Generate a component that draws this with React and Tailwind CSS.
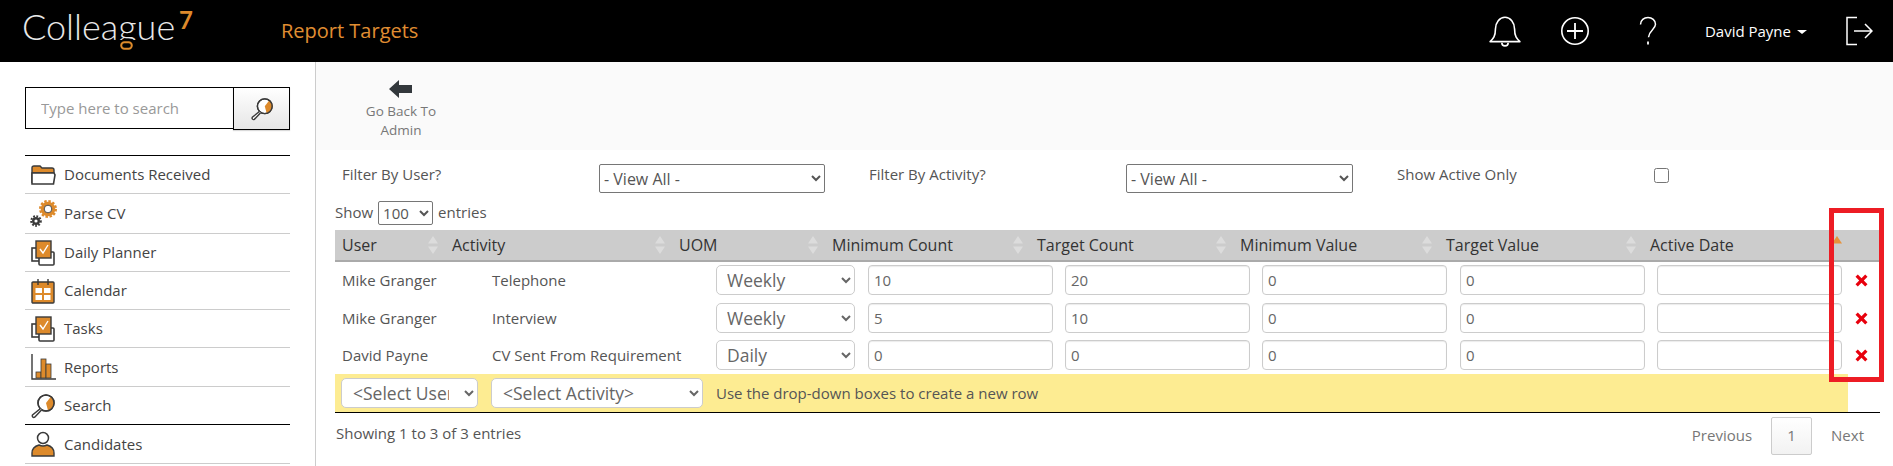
import React from "react";

const OR = "#dd8a2b";
const DK = "#3a3a3a";

const FolderIcon = () => (
  <svg width="26" height="22" viewBox="0 0 26 22" fill="none">
    <path d="M2 19V4q0-2 2-2h6l2 2h10q2 0 2 2v3H2z" fill={OR} stroke={DK} strokeWidth="1.4" />
    <path d="M2 9h22l1 2-1.5 9H2z" fill="#fff" stroke={DK} strokeWidth="1.6" />
  </svg>
);
const GearIcon = () => (
  <svg width="28" height="28" viewBox="0 0 28 28" fill="none">
    <circle cx="18" cy="9" r="5.5" fill="#fff" stroke={OR} strokeWidth="3.6" />
    <circle cx="18" cy="9" r="7.8" fill="none" stroke={OR} strokeWidth="2.4" strokeDasharray="2.4 1.7" />
    <circle cx="18" cy="9" r="3.8" fill="#fff" stroke={DK} strokeWidth="0.9" />
    <circle cx="6" cy="21" r="2.8" fill="#fff" stroke={DK} strokeWidth="2.4" />
    <circle cx="6" cy="21" r="4.8" fill="none" stroke={DK} strokeWidth="2" strokeDasharray="1.8 1.4" />
  </svg>
);
const TaskIcon = () => (
  <svg width="26" height="26" viewBox="0 0 26 26" fill="none">
    <rect x="2" y="8" width="12" height="13" fill="#fff" stroke={DK} strokeWidth="1.6" />
    <rect x="9" y="12" width="15" height="13" rx="1" fill="#fff" stroke={DK} strokeWidth="1.6" />
    <rect x="6" y="1" width="15" height="17" fill={OR} stroke={DK} strokeWidth="1.4" />
    <path d="M10 9l3 4 5-8" stroke="#fff" strokeWidth="1.4" />
  </svg>
);
const CalendarIcon = () => (
  <svg width="26" height="26" viewBox="0 0 26 26" fill="none">
    <rect x="2" y="4" width="22" height="21" rx="1" fill={OR} stroke={DK} strokeWidth="1.4" />
    <path d="M8 1v6M18 1v6" stroke={DK} strokeWidth="1.4" />
    <rect x="5.5" y="10" width="6.5" height="5" fill="#fff" />
    <rect x="14" y="10" width="6.5" height="5" fill="#fff" />
    <rect x="5.5" y="17" width="6.5" height="5" fill="#fff" />
    <rect x="14" y="17" width="6.5" height="5" fill="#fff" />
  </svg>
);
const ReportIcon = () => (
  <svg width="26" height="26" viewBox="0 0 26 26" fill="none">
    <path d="M2 0v25h24" stroke={DK} strokeWidth="1.4" />
    <rect x="6" y="18" width="5" height="6" fill={OR} stroke={DK} strokeWidth="0.8" />
    <rect x="11" y="5" width="5" height="19" fill={OR} stroke={DK} strokeWidth="0.8" />
    <rect x="16" y="10" width="5" height="14" fill={OR} stroke={DK} strokeWidth="0.8" />
  </svg>
);
const SearchGlass = ({ s = 26 }) => (
  <svg width={s} height={s} viewBox="0 0 26 26" fill="none">
    <circle cx="16" cy="10" r="8" fill="#fff" stroke={DK} strokeWidth="1.5" />
    <path d="M16 10l6.5-5A8 8 0 0 1 16 18z" fill={OR} transform="rotate(-15 16 10)" />
    <circle cx="16" cy="10" r="8" stroke={DK} strokeWidth="1.5" />
    <path d="M10.5 15.5L2.5 22a1.6 1.6 0 0 0 2.2 2.2L11.5 17" fill="#fff" stroke={DK} strokeWidth="1.5" />
  </svg>
);
const PersonIcon = () => (
  <svg width="26" height="26" viewBox="0 0 26 26" fill="none">
    <circle cx="13" cy="7" r="5.5" fill="#fff" stroke={DK} strokeWidth="1.5" />
    <path d="M2 25v-3q0-6 7-8 4 2 8 0 7 2 7 8v3z" fill={OR} stroke={DK} strokeWidth="1.4" />
  </svg>
);

const menu = [
  ["Documents Received", <FolderIcon />, "h-[38px]", "border-[#ccc]"],
  ["Parse CV", <GearIcon />, "h-[40px]", "border-[#ccc]"],
  ["Daily Planner", <TaskIcon />, "h-[38px]", "border-[#ccc]"],
  ["Calendar", <CalendarIcon />, "h-[38px]", "border-[#ccc]"],
  ["Tasks", <TaskIcon />, "h-[38px]", "border-[#ccc]"],
  ["Reports", <ReportIcon />, "h-[39px]", "border-[#ccc]"],
  ["Search", <SearchGlass />, "h-[38px]", "border-black"],
  ["Candidates", <PersonIcon />, "h-[39px]", "border-[#ccc]"],
];

const Sort = ({ active }) => (
  <svg width="10" height="18" viewBox="0 0 10 18" className="shrink-0">
    <path d="M5 0l5 7.5H0z" fill={active ? "#e8923a" : "#dcdcdc"} />
    {!active && <path d="M5 18l5-7.5H0z" fill="#dcdcdc" />}
  </svg>
);

const headers = [
  ["User", 110],
  ["Activity", 227],
  ["UOM", 153],
  ["Minimum Count", 205],
  ["Target Count", 203],
  ["Minimum Value", 206],
  ["Target Value", 204],
  ["Active Date", 206],
];

const rows = [
  ["Mike Granger", "Telephone", "Weekly", "10", "20", "h-[37px] [&>td]:pb-[1px]"],
  ["Mike Granger", "Interview", "Weekly", "5", "10", "h-[38px]"],
  ["David Payne", "CV Sent From Requirement", "Daily", "0", "0", "h-[37px] [&>td]:pb-[1px]"],
];

const Num = ({ v }) => (
  <input
    readOnly
    value={v}
    className="block w-full h-[30px] border border-[#ccc] rounded-[4px] bg-white px-[5px] text-[15px] text-[#666] shadow-[inset_0_1px_1px_rgba(0,0,0,0.08)] outline-none"
  />
);

const BigSelect = ({ v, cls }) => (
  <select
    defaultValue={v}
    className={`block h-[30px] border border-[#ccc] rounded-[5px] bg-white text-[17.5px] text-[#666] outline-none ${cls}`}
  >
    <option>{v}</option>
  </select>
);

const ViewAll = ({ cls }) => (
  <select className={`h-[29px] border border-[#767676] rounded-[2px] bg-white text-[16px] text-[#555] outline-none ${cls}`}>
    <option>- View All -</option>
  </select>
);

export default function App() {
  return (
    <div className="relative w-[1893px] h-[466px] overflow-hidden flex flex-col bg-white text-[15px] text-[#555] font-['Open_Sans',sans-serif]">
      <header className="h-[62px] shrink-0 bg-black flex items-center">
        <div className="relative ml-[22px] w-[171px] h-[62px]">
          <div className="flex pt-[2px] text-[36px] leading-[48px] font-light text-[#e8e8e8] font-['Lato',sans-serif] whitespace-nowrap">
            <span>Collea</span>
            <span className="block h-[38px] overflow-hidden">g</span>
            <span>ue</span>
          </div>
          <svg className="absolute left-[98px] top-[41px]" width="13" height="9" viewBox="0 0 13 9" fill="none">
            <rect x="1.2" y="1.2" width="10.6" height="6.6" rx="3.2" stroke={OR} strokeWidth="2" />
          </svg>
          <div className="absolute right-0 top-[6px] text-[24px] leading-[28px] font-bold text-[#dd8a2b] font-['Lato',sans-serif]">
            7
          </div>
        </div>
        <div className="ml-[88px] text-[20px] text-[#e08e32] whitespace-nowrap">Report Targets</div>
        <div className="ml-auto flex items-center text-white">
          <svg width="34" height="34" viewBox="0 0 32 32" fill="none" stroke="#fff" strokeWidth="1.5">
            <path d="M2 26c3-3 5-5 5-12 0-6 4-11 9-11s9 5 9 11c0 7 2 9 5 12z" strokeLinejoin="round" />
            <path d="M13 27a3 3 0 0 0 6 0" />
          </svg>
          <svg className="ml-[38px]" width="30" height="30" viewBox="0 0 30 30" fill="none" stroke="#fff" strokeWidth="1.6">
            <circle cx="15" cy="15" r="13.2" />
            <path d="M15 7v16M7 15h16" strokeWidth="1.8" />
          </svg>
          <svg className="ml-[49px]" width="18" height="30" viewBox="0 0 18 30" fill="none" stroke="#fff" strokeWidth="1.5">
            <path d="M1.5 8.5C1.5 4 5 1.5 9 1.5s7.5 2.8 7.5 6.8c0 5-6.5 6-7 13" />
            <path d="M9 25.5v3" strokeWidth="1.8" />
          </svg>
          <span className="ml-[48px] text-[15px]">David Payne</span>
          <span className="ml-[6px] mt-[2px] w-0 h-0 border-x-[5px] border-x-transparent border-t-[4px] border-t-white" />
          <svg className="ml-[39px] mr-[20px]" width="27" height="30" viewBox="0 0 27 30" fill="none" stroke="#fff" strokeWidth="1.5">
            <path d="M11 1.5H1v27h10" />
            <path d="M8 15h18M19 8l7 7-7 7" />
          </svg>
        </div>
      </header>

      <div className="flex flex-1 min-h-0">
        <aside className="w-[316px] shrink-0 border-r border-[#ccc] pl-[25px] pr-[25px] pt-[25px]">
          <div className="flex items-start">
            <input
              placeholder="Type here to search"
              className="w-[208px] h-[42px] border border-black border-r-0 px-[15px] text-[15px] text-[#555] placeholder:text-[#999] outline-none"
            />
            <button className="w-[57px] h-[43px] border border-black bg-gradient-to-b from-white to-[#e6e6e6] flex items-center justify-center shadow-[0_1px_1px_rgba(0,0,0,0.15)]">
              <SearchGlass s={24} />
            </button>
          </div>
          <ul className="mt-[25px] border-t border-black">
            {menu.map(([t, icon, h, b]) => (
              <li key={t} className={`${h} border-b ${b} flex items-center text-[15px] text-[#444]`}>
                <span className="w-[39px] pl-[5px] flex items-center shrink-0">{icon}</span>
                <span>{t}</span>
              </li>
            ))}
          </ul>
        </aside>

        <main className="flex-1 min-w-0">
          <div className="h-[88px] bg-[#fafafa] pl-[45px] pt-[18px]">
            <div className="w-[80px] flex flex-col items-center text-[13.5px] leading-[19px] text-[#777] text-center">
              <svg width="24" height="18" viewBox="0 0 24 18" className="mb-[4px]">
                <path d="M10 0v5h13v8H10v5L0 9z" fill="#33383c" />
              </svg>
              <span>Go Back To Admin</span>
            </div>
          </div>

          <div className="pl-[19px] pr-[13px]">
            <div className="h-[45px] flex items-start pt-[14px]">
              <span className="ml-[7px] w-[257px] mt-[1px] leading-[19px]">Filter By User?</span>
              <ViewAll cls="w-[226px]" />
              <span className="ml-[44px] w-[257px] mt-[1px] leading-[19px]">Filter By Activity?</span>
              <ViewAll cls="w-[227px]" />
              <span className="ml-[44px] w-[257px] mt-[1px] leading-[19px]">Show Active Only</span>
              <input type="checkbox" className="mt-[4px] w-[15px] h-[15px]" />
            </div>

            <div className="h-[35px] flex items-center gap-[5px]">
              <span>Show</span>
              <select className="w-[55px] h-[24px] border border-[#767676] rounded-[2px] bg-white text-[15px] text-[#555]">
                <option>100</option>
              </select>
              <span>entries</span>
            </div>

            <div className="flex h-[32px] w-[1545px] bg-[#ccc] border-b-2 border-[#aaa] text-[16px] text-[#333]">
              {headers.map(([h, w], i) => (
                <div key={h} style={{ width: w }} className="flex items-center justify-between pl-[7px] pr-[7px] shrink-0">
                  <span>{h}</span>
                  <Sort active={i === 7} />
                </div>
              ))}
            </div>

            <table className="w-[1545px] table-fixed border-b border-black border-collapse">
              <colgroup>
                <col className="w-[150px]" />
                <col className="w-[224px]" />
                <col className="w-[153px]" />
                <col className="w-[197px]" />
                <col className="w-[197px]" />
                <col className="w-[197px]" />
                <col className="w-[198px]" />
                <col className="w-[197px]" />
                <col className="w-[32px]" />
              </colgroup>
              <tbody>
                {rows.map((r, i) => (
                  <tr key={i} className={r[5]}>
                    <td className="pl-[7px]">{r[0]}</td>
                    <td className="pl-[7px]">{r[1]}</td>
                    <td className="px-[7px]"><BigSelect v={r[2]} cls="w-[139px] pl-[6px]" /></td>
                    <td className="px-[6px]"><Num v={r[3]} /></td>
                    <td className="px-[6px]"><Num v={r[4]} /></td>
                    <td className="px-[6px]"><Num v="0" /></td>
                    <td className="pl-[7px] pr-[6px]"><Num v="0" /></td>
                    <td className="px-[6px]"><Num v="" /></td>
                    <td className="pr-[6px]">
                      <svg width="13" height="13" viewBox="0 0 13 13" className="mx-auto">
                        <path d="M2.8 0.5L6.5 4.2L10.2 0.5L12.5 2.8L8.8 6.5L12.5 10.2L10.2 12.5L6.5 8.8L2.8 12.5L0.5 10.2L4.2 6.5L0.5 2.8Z" fill="#e8000d" />
                      </svg>
                    </td>
                  </tr>
                ))}
                <tr className="h-[38px]">
                  <td className="bg-[#fdec92] pl-[6px]"><BigSelect v="<Select User>" cls="w-[137px] pl-[7px] pr-[12px]" /></td>
                  <td className="bg-[#fdec92] pl-[6px]"><BigSelect v="<Select Activity>" cls="w-[212px] pl-[7px]" /></td>
                  <td colSpan={6} className="bg-[#fdec92] pl-[7px] text-[#555]">Use the drop-down boxes to create a new row</td>
                  <td />
                </tr>
              </tbody>
            </table>

            <div className="flex items-center justify-between h-[46px] w-[1545px] pl-[1px] pr-[16px]">
              <span className="mb-[4px]">Showing 1 to 3 of 3 entries</span>
              <div className="flex items-center text-[#777]">
                <span>Previous</span>
                <span className="ml-[19px] w-[41px] h-[38px] border border-[#ccc] rounded-[2px] bg-gradient-to-b from-white to-[#f2f2f2] flex items-center justify-center">1</span>
                <span className="ml-[19px]">Next</span>
              </div>
            </div>
          </div>
        </main>
      </div>

      <div className="absolute left-[1829px] top-[208px] w-[55px] h-[174px] border-[5px] border-[#ed1c24] pointer-events-none" />
    </div>
  );
}
